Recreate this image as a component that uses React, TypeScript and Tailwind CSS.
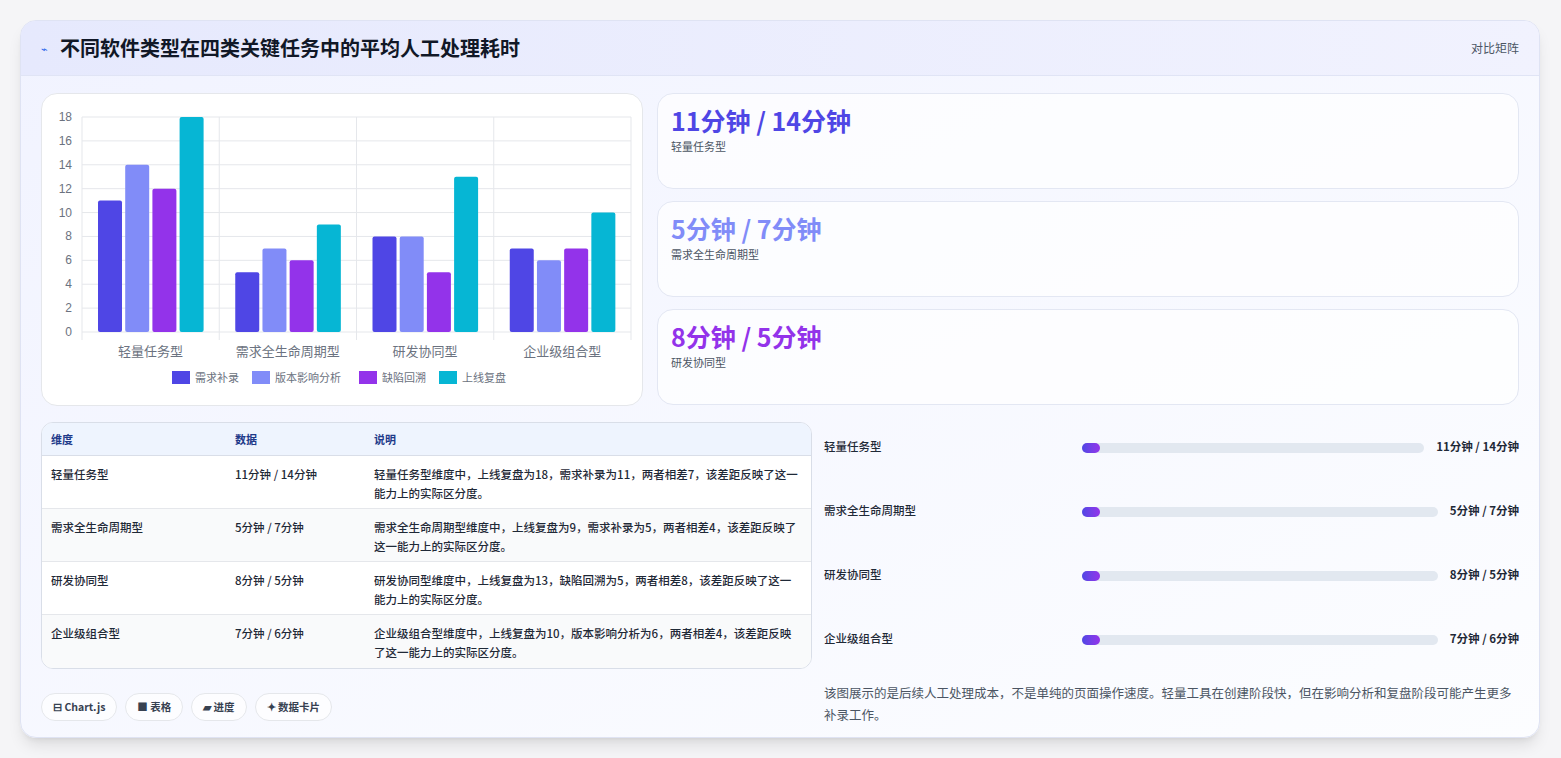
const F = { fontFamily: '"Noto Sans CJK SC", "Noto Sans", sans-serif' }

const cats = ['轻量任务型', '需求全生命周期型', '研发协同型', '企业级组合型']
const series = [
  { name: '需求补录', color: '#4f46e5', data: [11, 5, 8, 7] },
  { name: '版本影响分析', color: '#818cf8', data: [14, 7, 8, 6] },
  { name: '缺陷回溯', color: '#9333ea', data: [12, 6, 5, 7] },
  { name: '上线复盘', color: '#06b6d4', data: [18, 9, 13, 10] },
]

const stats = [
  { v: '11分钟 / 14分钟', l: '轻量任务型', c: 'text-[#4f46e5]' },
  { v: '5分钟 / 7分钟', l: '需求全生命周期型', c: 'text-[#818cf8]' },
  { v: '8分钟 / 5分钟', l: '研发协同型', c: 'text-[#9333ea]' },
]

const rows = [
  ['轻量任务型', '11分钟 / 14分钟', '轻量任务型维度中，上线复盘为18，需求补录为11，两者相差7，该差距反映了这一能力上的实际区分度。'],
  ['需求全生命周期型', '5分钟 / 7分钟', '需求全生命周期型维度中，上线复盘为9，需求补录为5，两者相差4，该差距反映了这一能力上的实际区分度。'],
  ['研发协同型', '8分钟 / 5分钟', '研发协同型维度中，上线复盘为13，缺陷回溯为5，两者相差8，该差距反映了这一能力上的实际区分度。'],
  ['企业级组合型', '7分钟 / 6分钟', '企业级组合型维度中，上线复盘为10，版本影响分析为6，两者相差4，该差距反映了这一能力上的实际区分度。'],
]

function Chart() {
  const x0 = 40, x1 = 589, yTop = 23, yBot = 238
  const gw = (x1 - x0) / 4
  const u = (yBot - yTop) / 18
  return (
    <svg width="600" height="310" style={F}>
      {[0, 2, 4, 6, 8, 10, 12, 14, 16, 18].map((t) => (
        <g key={t}>
          <line x1={x0} x2={x1} y1={yBot - t * u} y2={yBot - t * u} stroke="#e5e7eb" />
          <text x={x0 - 10} y={yBot - t * u + 4} textAnchor="end" fontSize="12" fill="#6b7280" fontFamily="Liberation Sans">{t}</text>
        </g>
      ))}
      {[0, 1, 2, 3, 4].map((i) => (
        <line key={i} x1={x0 + i * gw} x2={x0 + i * gw} y1={yTop} y2={yBot + 8} stroke="#e5e7eb" />
      ))}
      {cats.map((c, gi) => (
        <g key={c}>
          {series.map((s, si) => {
            const h = s.data[gi] * u
            return <rect key={si} x={x0 + gi * gw + 16 + si * 27.2} y={yBot - h} width={24} height={h} rx="2" fill={s.color} />
          })}
          <text x={x0 + gi * gw + gw / 2} y={yBot + 24} textAnchor="middle" fontSize="13" fill="#6b7280">{c}</text>
        </g>
      ))}
      {series.map((s, i) => {
        const xs = [130, 210, 317, 397][i]
        return (
          <g key={s.name}>
            <rect x={xs} y={277} width={18} height={13} fill={s.color} />
            <text x={xs + 23} y={288} fontSize="11" fill="#6b7280">{s.name}</text>
          </g>
        )
      })}
    </svg>
  )
}

export default function App() {
  return (
    <div className="w-[1561px] h-[758px] bg-[#f5f5f7] pt-5 pl-5" style={F}>
      <div className="w-[1520px] h-[718px] rounded-2xl border border-[#dfe3f3] bg-gradient-to-br from-[#f1f3ff] to-[#fcfdff] overflow-hidden shadow-lg">
        <div className="h-[55px] flex items-center justify-between px-5 bg-gradient-to-r from-[#e6e9fd] to-[#f1f2fe] border-b border-[#e0e4f5]">
          <div className="flex items-center gap-3">
            <span className="text-[11px] text-[#2563eb]">⌁</span>
            <h1 className="text-[20px] font-bold text-[#111827]">不同软件类型在四类关键任务中的平均人工处理耗时</h1>
          </div>
          <span className="text-xs text-[#4b5563]">对比矩阵</span>
        </div>
        <div className="px-5 pt-[17px]">
          <div className="flex gap-[14px]">
            <div className="w-[602px] h-[313px] rounded-2xl border border-[#e5e7eb] bg-white shrink-0">
              <Chart />
            </div>
            <div className="flex-1 flex flex-col gap-3">
              {stats.map((s) => (
                <div key={s.l} className="h-[96px] rounded-2xl border border-[#e3e7f3] bg-white/70 px-[13px] pt-[10px]">
                  <div className={`text-[25px] font-bold leading-[32px] ${s.c}`}>{s.v}</div>
                  <div className="text-[11px] text-[#4b5563] mt-[2px]">{s.l}</div>
                </div>
              ))}
            </div>
          </div>
          <div className="flex gap-3 mt-[16px]">
            <div className="w-[771px] shrink-0">
              <div className="rounded-xl border border-[#d9dee8] overflow-hidden bg-white">
                <div className="grid grid-cols-[184px_139px_1fr] h-[33px] items-center px-[9px] bg-[#eef4fe] border-b border-[#d9dee8] text-[11px] font-bold text-[#1e3a8a]">
                  <div>维度</div><div>数据</div><div>说明</div>
                </div>
                {rows.map((r, i) => (
                  <div key={i} className={`grid grid-cols-[184px_139px_1fr] h-[53px] pt-[9px] px-[9px] text-[11.5px] text-[#1f2937] font-medium leading-[19px] ${i % 2 ? 'bg-[#f9fafb]' : 'bg-white'} ${i < 3 ? 'border-b border-[#e5e7eb]' : ''}`}>
                    <div>{r[0]}</div><div>{r[1]}</div><div className="pr-1">{r[2]}</div>
                  </div>
                ))}
              </div>
              <div className="flex gap-2 mt-6">
                {['⊟ Chart.js', '■ 表格', '▰ 进度', '✦ 数据卡片'].map((c) => (
                  <span key={c} className="h-7 px-[11px] rounded-full border border-[#e5e7eb] bg-white/70 flex items-center text-[10.5px] font-bold text-[#374151]">{c}</span>
                ))}
              </div>
            </div>
            <div className="flex-1">
              <div className="flex flex-col pt-[8px]">
                {rows.map((r, i) => (
                  <div key={i} className="h-[64px] flex items-start pt-[8px] pr-0 gap-2">
                    <div className="w-[250px] text-[11.5px] font-medium text-[#1f2937] shrink-0">{r[0]}</div>
                    <div className="flex-1 mt-[5px] h-[10px] rounded-full bg-[#e2e8f0]">
                      <div className="h-full w-[18px] rounded-full bg-gradient-to-r from-[#4f46e5] to-[#9333ea]" />
                    </div>
                    <div className="text-[11.5px] font-bold text-[#1f2937] ml-1">{r[1]}</div>
                  </div>
                ))}
              </div>
              <p className="text-[12.5px] leading-[22px] text-[#4b5563] mt-[-4px]">该图展示的是后续人工处理成本，不是单纯的页面操作速度。轻量工具在创建阶段快，但在影响分析和复盘阶段可能产生更多补录工作。</p>
            </div>
          </div>
        </div>
      </div>
    </div>
  )
}
